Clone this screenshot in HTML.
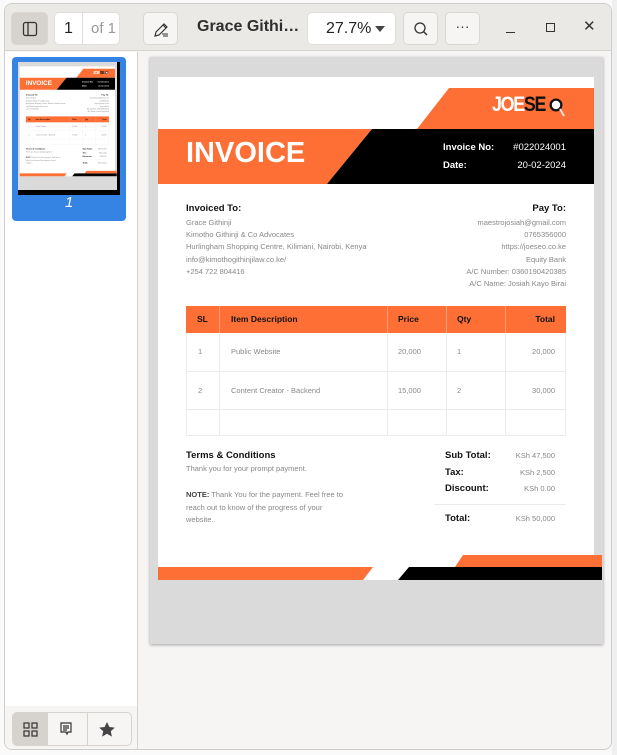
<!DOCTYPE html>
<html><head><meta charset="utf-8"><style>
*{margin:0;padding:0;box-sizing:border-box}
body{width:617px;height:755px;overflow:hidden;background:#fafafa;font-family:"Liberation Sans",sans-serif;position:relative}
.abs{position:absolute}
.win{position:absolute;left:4px;top:3px;width:608px;height:747px;background:#f6f5f4;border-radius:8px;border:1px solid #cfcdca;overflow:hidden}
.hdr{position:absolute;left:0;top:0;width:608px;height:47px;background:#ebe9e6;border-bottom:1px solid #d6d3cf}
.btn{position:absolute;top:8px;height:33px;border-radius:5px;background:#f6f5f4;border:1px solid #dad7d3}
.page{position:absolute;width:453px;height:587px;background:#dadada;box-shadow:0 1px 3px rgba(0,0,0,.35)}
.page .t{position:absolute;white-space:nowrap;color:#888;font-size:7.5px}
.page .b{color:#111;font-weight:bold;font-size:9.5px}
.r{text-align:right}
</style></head><body>
<div class="abs" style="left:612px;top:0;width:5px;height:755px;background:#f0f0f0"></div>
<div class="win">
 <div class="hdr">
  <div class="btn" style="left:6px;width:37px;background:#d6d2ce">
   <svg width="37" height="33" viewBox="0 0 37 33"><rect x="11.5" y="9.5" width="13" height="13" rx="2" fill="none" stroke="#333" stroke-width="1.3"/><line x1="16" y1="10" x2="16" y2="22" stroke="#333" stroke-width="1.3"/></svg>
  </div>
  <div class="btn" style="left:49px;width:66px;background:#fff;border-color:#e0dedb">
   <div class="abs" style="left:0;top:0;width:28px;height:31px;border-right:1px solid #e0dedb;font-size:16px;line-height:31px;text-align:center;color:#222">1</div>
   <div class="abs" style="left:36px;top:0;font-size:15px;line-height:31px;color:#999">of 1</div>
  </div>
  <div class="btn" style="left:138px;width:35px">
   <svg width="35" height="33" viewBox="0 0 35 33"><path d="M11 23 L12 19 L20 11 L23 14 L15 22 Z M19 12 L22 15" fill="none" stroke="#333" stroke-width="1.2"/><path d="M18 21h6M19 23h5" stroke="#333" stroke-width="1"/></svg>
  </div>
  <div class="abs" style="left:192px;top:14px;font-size:16px;font-weight:bold;color:#2e2e2e">Grace Githi…</div>
  <div class="btn" style="left:302px;width:89px;background:#fff;border-color:#e0dedb">
   <div class="abs" style="left:18px;top:0;font-size:16px;line-height:31px;color:#222">27.7%</div>
   <svg class="abs" style="left:66px;top:12px" width="12" height="8"><path d="M1 1h10L6 7z" fill="#444"/></svg>
  </div>
  <div class="btn" style="left:398px;width:35px">
   <svg width="35" height="33" viewBox="0 0 35 33"><circle cx="16" cy="15" r="5" fill="none" stroke="#333" stroke-width="1.3"/><line x1="19.5" y1="18.5" x2="23" y2="22" stroke="#333" stroke-width="1.4"/></svg>
  </div>
  <div class="btn" style="left:440px;width:35px;text-align:center;font-size:14px;line-height:26px;color:#333">···</div>
  <div class="abs" style="left:501px;top:28px;width:9px;height:1.3px;background:#333"></div>
  <div class="abs" style="left:541px;top:19px;width:9px;height:9px;border:1.3px solid #333"></div>
  <div class="abs" style="left:578px;top:13px;font-size:15px;color:#333">✕</div>
 </div>
 <div class="abs" style="left:0;top:48px;width:133px;height:699px;background:#fff;border-right:1px solid #d6d3cf"></div>
 <div class="abs" style="left:7px;top:53px;width:114px;height:164px;background:#3584e4;border-radius:4px"></div>
 <div class="abs" style="left:13px;top:58px;width:102px;height:133px;background:#000"></div>
 <div class="abs" style="left:60px;top:190px;color:#fff;font-size:15px;font-style:italic">1</div>
 <div class="abs" style="left:0;top:702px;width:133px;height:45px;background:#f6f5f4;border-right:1px solid #d6d3cf"></div>
 <div class="abs" style="left:7px;top:708px;width:120px;height:34px;border:1px solid #d6d3cf;border-radius:5px;background:#f6f5f4;overflow:hidden">
  <div class="abs" style="left:0;top:0;width:34px;height:34px;background:#d6d2ce"></div>
  <div class="abs" style="left:34px;top:0;width:1px;height:34px;background:#d6d3cf"></div>
  <div class="abs" style="left:74px;top:0;width:1px;height:34px;background:#d6d3cf"></div>
  <svg class="abs" style="left:0;top:0" width="120" height="34"><g fill="none" stroke="#333" stroke-width="1.2"><rect x="11" y="10" width="5" height="5"/><rect x="19" y="10" width="5" height="5"/><rect x="11" y="18" width="5" height="5"/><rect x="19" y="18" width="5" height="5"/><path d="M48 10h10v9h-3l-1 2-1-2h-5z"/><path d="M50 13h6M50 15h6M50 17h4"/></g><path d="M94 9l2.4 5 5.4.6-4 3.7 1.1 5.3-4.9-2.8-4.9 2.8 1.1-5.3-4-3.7 5.4-.6z" fill="#444"/></svg>
 </div>
</div>

<div id="pg" class="page" style="left:150px;top:57px">
 <svg class="abs" style="left:0;top:0" width="453" height="587">
  <rect x="8" y="20" width="436" height="503" fill="#fff"/>
  <polygon points="267,72 299,31 444,31 444,72" fill="#fe6f35"/>
  <polygon points="8,72 222,72 177,127 8,127" fill="#fe6f35"/>
  <polygon points="222,72 444,72 444,127 177,127" fill="#000"/>
  <polygon points="8,510 223,510 213,523 8,523" fill="#fe6f35"/>
  <polygon points="259,510 452,510 452,523 248,523" fill="#000"/>
  <polygon points="313,498 452,498 452,510 305,510" fill="#fe6f35"/>
  <g stroke="#ebebeb" stroke-width="1" fill="none">
   <rect x="36.5" y="249.5" width="379" height="129"/>
   <line x1="36" y1="314.5" x2="416" y2="314.5"/><line x1="36" y1="352.5" x2="416" y2="352.5"/>
   <line x1="69.5" y1="249" x2="69.5" y2="378"/><line x1="237.5" y1="249" x2="237.5" y2="378"/>
   <line x1="296.5" y1="249" x2="296.5" y2="378"/><line x1="355.5" y1="249" x2="355.5" y2="378"/>
   <line x1="284" y1="447.5" x2="416" y2="447.5"/>
  </g>
  <rect x="36" y="249" width="380" height="27" fill="#fe6f35"/>
  <g stroke="#ffa07a" stroke-width="1"><line x1="69.5" y1="249" x2="69.5" y2="276"/><line x1="237.5" y1="249" x2="237.5" y2="276"/><line x1="296.5" y1="249" x2="296.5" y2="276"/><line x1="355.5" y1="249" x2="355.5" y2="276"/></g>
  <circle cx="406" cy="48" r="7" fill="#111" stroke="#fe6f35" stroke-width="1"/><circle cx="406" cy="48" r="4.2" fill="#fff"/><line x1="410" y1="52" x2="414" y2="59" stroke="#ddd" stroke-width="2"/>
 </svg>
 <div class="t" style="left:342px;top:36px;font-size:21px;font-weight:bold;letter-spacing:-1.5px;color:#fff;transform:scaleX(0.85);transform-origin:0 0">JOE<span style="color:#111">SE</span></div>
 <div class="t" style="left:36px;top:80px;font-size:29px;font-weight:bold;color:#fff">INVOICE</div>
 <div class="t" style="left:293px;top:85px;font-size:9.5px;font-weight:bold;color:#fff">Invoice No:</div>
 <div class="t r" style="right:37px;top:85px;font-size:9.5px;color:#fff">#022024001</div>
 <div class="t" style="left:293px;top:103px;font-size:9.5px;font-weight:bold;color:#fff">Date:</div>
 <div class="t r" style="right:37px;top:103px;font-size:9.5px;color:#fff">20-02-2024</div>
 <div class="t b" style="left:36px;top:146px">Invoiced To:</div>
 <div class="t" style="left:36px;top:160px;line-height:12.2px">Grace Githinji<br>Kimotho Githinji &amp; Co Advocates<br>Hurlingham Shopping Centre, Kilimani, Nairobi, Kenya<br>info@kimothogithinjilaw.co.ke/<br>+254 722 804416</div>
 <div class="t b r" style="right:37px;top:146px">Pay To:</div>
 <div class="t r" style="right:37px;top:160px;line-height:12.2px">maestrojosiah@gmail.com<br>0765356000<br>https://joeseo.co.ke<br>Equity Bank<br>A/C Number: 0360190420385<br>A/C Name: Josiah Kayo Birai</div>
 <div class="t" style="left:47px;top:257px;font-size:8.5px;font-weight:bold;color:#111">SL</div>
 <div class="t" style="left:81px;top:257px;font-size:8.5px;font-weight:bold;color:#111">Item Description</div>
 <div class="t" style="left:248px;top:257px;font-size:8.5px;font-weight:bold;color:#111">Price</div>
 <div class="t" style="left:307px;top:257px;font-size:8.5px;font-weight:bold;color:#111">Qty</div>
 <div class="t r" style="right:48px;top:257px;font-size:8.5px;font-weight:bold;color:#111">Total</div>
 <div class="t" style="left:48px;top:290px">1</div><div class="t" style="left:81px;top:290px">Public Website</div><div class="t" style="left:248px;top:290px">20,000</div><div class="t" style="left:307px;top:290px">1</div><div class="t r" style="right:48px;top:290px">20,000</div>
 <div class="t" style="left:48px;top:329px">2</div><div class="t" style="left:81px;top:329px">Content Creator - Backend</div><div class="t" style="left:248px;top:329px">15,000</div><div class="t" style="left:307px;top:329px">2</div><div class="t r" style="right:48px;top:329px">30,000</div>
 <div class="t b" style="left:36px;top:393px">Terms &amp; Conditions</div>
 <div class="t" style="left:36px;top:407px">Thank you for your prompt payment.</div>
 <div class="t" style="left:36px;top:432px;line-height:12.6px"><b style="color:#444">NOTE:</b> Thank You for the payment. Feel free to<br>reach out to know of the progress of your<br>website..</div>
 <div class="t b" style="left:295px;top:393px">Sub Total:</div><div class="t r" style="right:48px;top:394px">KSh 47,500</div>
 <div class="t b" style="left:295px;top:410px">Tax:</div><div class="t r" style="right:48px;top:411px">KSh 2,500</div>
 <div class="t b" style="left:295px;top:426px">Discount:</div><div class="t r" style="right:48px;top:427px">KSh 0.00</div>
 <div class="t b" style="left:295px;top:456px">Total:</div><div class="t r" style="right:48px;top:457px">KSh 50,000</div>
</div>
<div id="thumb" class="abs" style="left:18px;top:62px;width:99px;height:128px;overflow:hidden;background:#dadada"></div>
<script>
var c=document.getElementById('pg').cloneNode(true);c.id='';c.style.left='0';c.style.top='0';c.style.transform='scale(0.2185)';c.style.transformOrigin='0 0';c.style.boxShadow='none';document.getElementById('thumb').appendChild(c);
</script>
</body></html>
